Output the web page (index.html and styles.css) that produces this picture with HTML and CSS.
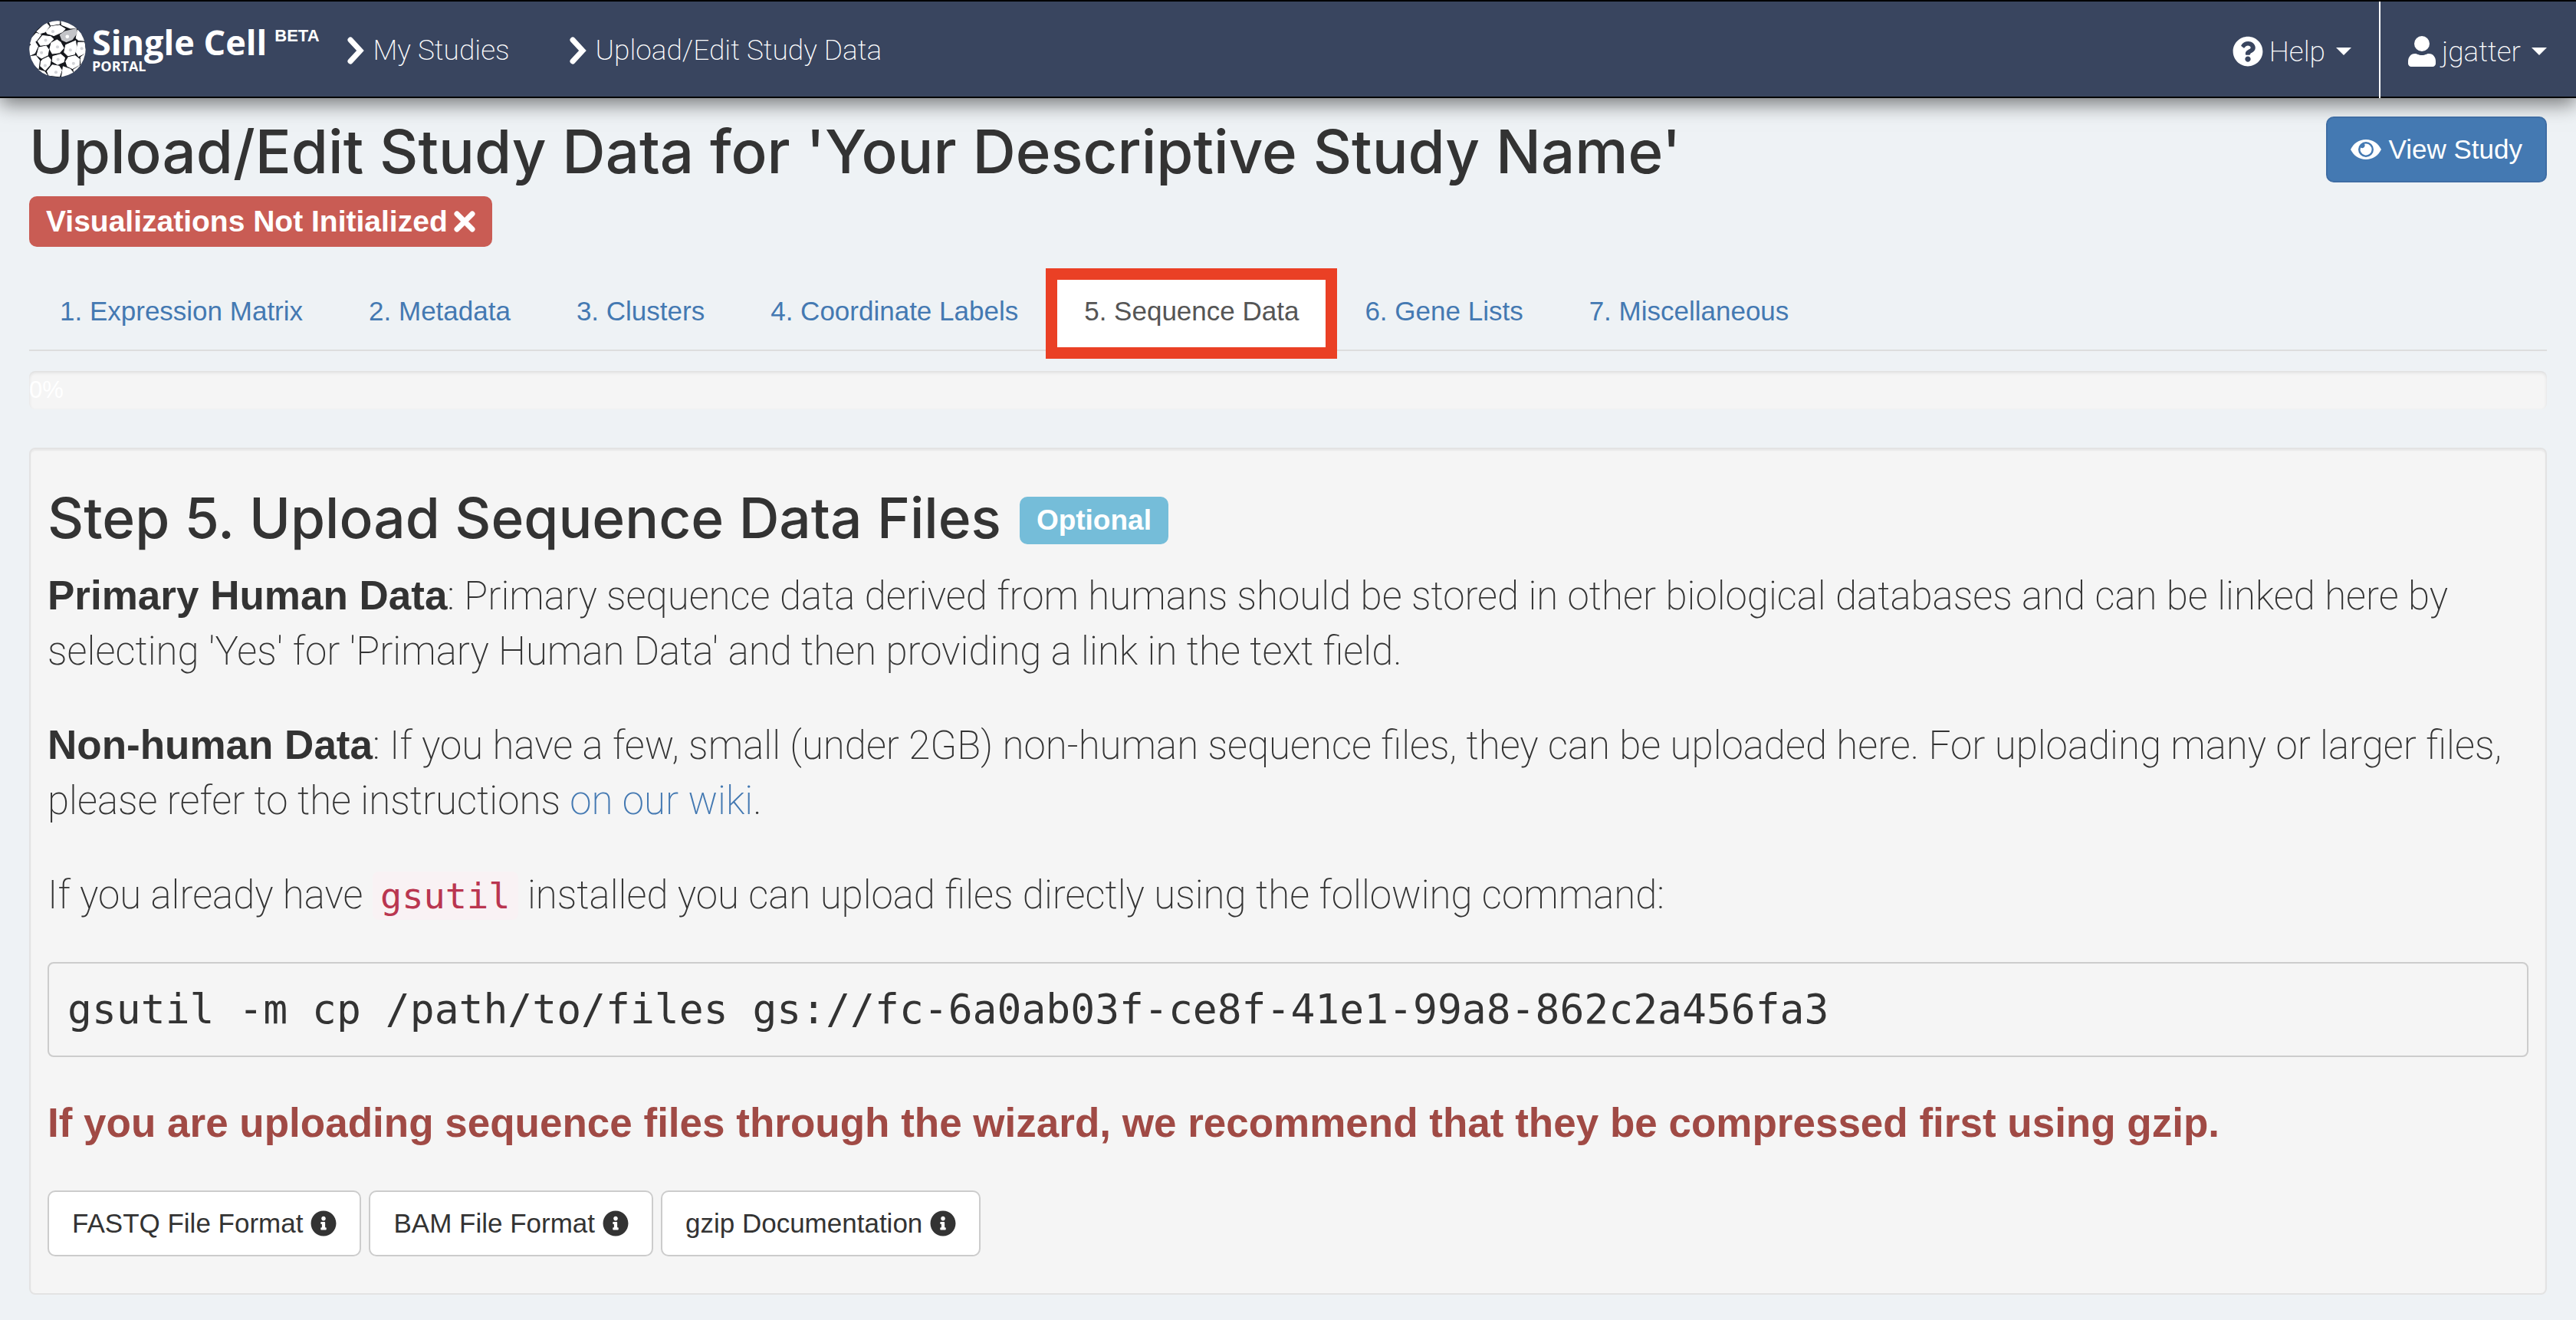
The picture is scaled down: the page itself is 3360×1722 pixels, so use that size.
FILE: index.html
```html
<!DOCTYPE html>
<html lang="en">
<head>
<meta charset="utf-8">
<title>Upload/Edit Study Data - Single Cell Portal</title>
<link rel="stylesheet" href="styles.css">
</head>
<body>
<svg class="sprite" aria-hidden="true">
  <symbol id="chevron" viewBox="0 0 22 36"><path d="M4 4 17 18 4 32" fill="none" stroke="currentColor" stroke-width="7" stroke-linecap="round" stroke-linejoin="miter"/></symbol>
  <symbol id="info" viewBox="0 0 512 512"><path fill="currentColor" d="M256 8C119 8 8 119 8 256s111 248 248 248 248-111 248-248S393 8 256 8zm0 110c23 0 42 19 42 42s-19 42-42 42-42-19-42-42 19-42 42-42zm56 254c0 7-5 12-12 12h-88c-7 0-12-5-12-12v-24c0-7 5-12 12-12h12v-64h-12c-7 0-12-5-12-12v-24c0-7 5-12 12-12h64c7 0 12 5 12 12v100h12c7 0 12 5 12 12z"/></symbol>
</svg>
<nav class="navbar">
  <a class="brand" href="#">
    <svg class="brand-mark" viewBox="0 0 220 220" aria-hidden="true">
      <defs><clipPath id="disc"><circle cx="110" cy="110" r="109"/></clipPath></defs>
      <g clip-path="url(#disc)">
        <circle cx="110" cy="110" r="110" fill="#15171c"/>
        <g fill="#fff" stroke="#fff" stroke-width="3" stroke-linejoin="round">
          <path d="M30 42 66 8 78 22 62 44 42 50z"/><path d="M76 0h42v12L84 18z"/><path d="M124 0h40l24 28-28 2-34-14z"/>
          <path d="M66 42 86 22 118 18 140 32 128 44 96 58 70 50z"/>
          <path d="M0 78 28 48 46 54 30 76 8 94z"/><path d="M34 80 52 58 84 62 94 72 74 92 44 96z"/>
          <path d="M188 36 214 60 220 78 192 76 182 68z"/>
          <path d="M86 86 108 74 122 84 134 106 118 124 90 128 80 110z"/>
          <path d="M142 94 166 84 180 78 184 106 176 130 150 136 136 122z"/>
          <path d="M190 84h24l6 40-28 14-10-16z"/>
          <path d="M0 100 24 84 34 100 22 126 0 136z"/><path d="M38 104 66 98 76 112 72 134 48 146 30 134z"/>
          <path d="M6 138 26 136 40 154 36 186 10 166z"/><path d="M54 150 74 140 84 152 80 172 62 192 44 176 46 158z"/>
          <path d="M92 138 122 130 138 144 134 160 110 170 90 158z"/>
          <path d="M142 158 152 142 178 136 196 150 194 172 168 186 148 176z"/>
          <path d="M200 142 220 126v30l-18 24z"/>
          <path d="M70 196 90 172 116 176 126 192 118 216 76 212z"/><path d="M132 178 160 188 172 204 126 220z"/><path d="M172 190 198 174 190 200 176 206z"/><path d="M36 190 60 198 70 212 40 204z"/>
        </g>
        <path fill="#c3c4c8" d="M118 54 138 40 184 30 186 50 168 74 144 84 126 76z"/>
        <g fill="#d3d4d8"><circle cx="92" cy="42" r="6"/><circle cx="64" cy="76" r="6"/><circle cx="110" cy="102" r="6"/><circle cx="160" cy="114" r="6"/><circle cx="204" cy="108" r="6"/><circle cx="48" cy="124" r="6"/><circle cx="62" cy="174" r="6"/><circle cx="112" cy="150" r="6"/><circle cx="172" cy="166" r="6"/><circle cx="104" cy="200" r="6"/></g>
        <circle cx="148" cy="62" r="7" fill="#fff"/>
      </g>
    </svg>
    <span class="brand-text"><span class="brand-name">Single Cell</span><span class="brand-sub">PORTAL</span></span>
    <span class="beta">BETA</span>
  </a>
  <a class="crumb" href="#"><svg class="chevron"><use href="#chevron"/></svg>My Studies</a>
  <a class="crumb" href="#"><svg class="chevron"><use href="#chevron"/></svg>Upload/Edit Study Data</a>
  <div class="nav-right">
    <button class="nav-menu" type="button"><svg class="nav-icon" viewBox="0 0 512 512" aria-hidden="true"><path fill="currentColor" d="M504 256c0 137-111 248-248 248S8 393 8 256 119 8 256 8s248 111 248 248zM263 90c-55 0-90 23-117 64-4 5-2 13 3 17l35 26c5 4 13 3 17-2 18-23 30-36 57-36 20 0 45 13 45 33 0 15-12 22-32 33-24 14-55 30-55 72v7c0 7 5 12 12 12h56c7 0 12-5 12-12v-2c0-29 85-30 85-108 0-59-61-104-118-104zm-7 248c-26 0-47 21-47 47s21 47 47 47 47-21 47-47-21-47-47-47z"/></svg>Help<span class="caret"></span></button>
    <button class="nav-menu user" type="button"><svg class="nav-icon user-icon" viewBox="0 0 36 40" aria-hidden="true"><circle cx="18" cy="10" r="10" fill="currentColor"/><path fill="currentColor" d="M9 23c3 0 4 2 9 2s6-2 9-2c6 0 9 5 9 10v3c0 2-2 4-4 4H4c-2 0-4-2-4-4v-3c0-5 3-10 9-10z"/></svg>jgatter<span class="caret"></span></button>
  </div>
</nav>
<main class="page">
  <header class="page-head">
    <h1>Upload/Edit Study Data for 'Your Descriptive Study Name'</h1>
    <a class="btn btn-primary" href="#"><svg class="eye" viewBox="0 0 40 28" aria-hidden="true"><path fill="currentColor" fill-rule="evenodd" d="M0 14C4 6 11 1 20 1s16 5 20 13c-4 8-11 13-20 13S4 22 0 14zM20 4a10 10 0 1 0 0 20 10 10 0 0 0 0-20z"/><path fill="currentColor" d="M20 6.500a7.500 7.500 0 1 1-7 5 3.500 3.500 0 0 0 5-4.700z"/></svg>View Study</a>
  </header>
  <span class="label label-danger">Visualizations Not Initialized<svg class="times" viewBox="0 0 28 28" aria-hidden="true"><path d="M4 4 24 24M24 4 4 24" stroke="currentColor" stroke-width="7" stroke-linecap="round"/></svg></span>
  <ul class="tabs">
    <li><a href="#">1. Expression Matrix</a></li>
    <li><a href="#">2. Metadata</a></li>
    <li><a href="#">3. Clusters</a></li>
    <li><a href="#">4. Coordinate Labels</a></li>
    <li class="active"><a href="#">5. Sequence Data</a></li>
    <li><a href="#">6. Gene Lists</a></li>
    <li><a href="#">7. Miscellaneous</a></li>
  </ul>
  <div class="progress" role="progressbar" aria-valuenow="0" aria-valuemin="0" aria-valuemax="100">0%</div>
  <section class="well">
    <h2>Step 5. Upload Sequence Data Files <span class="label label-info">Optional</span></h2>
    <p class="lead"><strong>Primary Human Data</strong>: Primary sequence data derived from humans should be stored in other biological databases and can be linked here by selecting 'Yes' for 'Primary Human Data' and then providing a link in the text field.</p>
    <p class="lead"><strong>Non-human Data</strong>: If you have a few, small (under 2GB) non-human sequence files, they can be uploaded here. For uploading many or larger files, please refer to the instructions <a href="#">on our wiki</a>.</p>
    <p class="lead">If you already have <code>gsutil</code> installed you can upload files directly using the following command:</p>
    <pre>gsutil -m cp /path/to/files gs://fc-6a0ab03f-ce8f-41e1-99a8-862c2a456fa3</pre>
    <p class="lead warning"><strong>If you are uploading sequence files through the wizard, we recommend that they be compressed first using gzip.</strong></p>
    <div class="actions">
      <a class="btn btn-default" href="#">FASTQ File Format<svg class="info"><use href="#info"/></svg></a>
      <a class="btn btn-default" href="#">BAM File Format<svg class="info"><use href="#info"/></svg></a>
      <a class="btn btn-default" href="#">gzip Documentation<svg class="info"><use href="#info"/></svg></a>
    </div>
  </section>
</main>
</body>
</html>
```
FILE: styles.css
```css
* { box-sizing: border-box; }
body {
  margin: 0;
  background: #eef2f5;
  color: #333;
  font-family: "Liberation Sans", Arial, sans-serif;
  font-size: 35px;
  line-height: 52px;
}
a { color: #4479b2; text-decoration: none; }
.sprite { display: none; }

/* Navigation bar */
.navbar {
  display: flex;
  align-items: center;
  height: 128px;
  padding-left: 38px;
  background: #39455f;
  border-top: 2px solid #000;
  border-bottom: 2px solid #000;
  box-shadow: 0 8px 24px rgba(0, 0, 0, .5);
  color: #fff;
}
.brand { display: flex; align-items: center; color: #fff; }
.brand-mark { width: 74px; height: 74px; margin-right: 8px; }
.brand-text { display: flex; flex-direction: column; font-family: "Open Sans", sans-serif; font-weight: 700; }
.brand-name { font-size: 45px; line-height: 44px; }
.brand-sub { font-size: 18px; line-height: 18px; }
.beta { align-self: flex-start; margin: 8px 0 0 10px; font-size: 22px; line-height: 24px; font-weight: 700; }
.crumb, .nav-menu {
  display: flex;
  align-items: center;
  padding-top: 4px;
  color: #fff;
  font-family: Roboto, sans-serif;
  font-size: 37px;
  font-weight: 200;
}
.crumb { margin-left: 36px; }
.crumb + .crumb { margin-left: 78px; }
.chevron { width: 22px; height: 36px; margin-right: 12px; }
.nav-right { display: flex; align-self: stretch; margin-left: auto; }
.nav-menu {
  padding: 4px 36px 0;
  margin-bottom: -2px;
  border: 0;
  background: none;
}
.nav-menu.user { border-left: 2px solid #fff; padding-right: 38px; }
.nav-icon { width: 40px; height: 40px; margin-right: 8px; }
.user-icon { width: 36px; }
.caret {
  margin-left: 14px;
  border-top: 10px solid #fff;
  border-left: 10px solid transparent;
  border-right: 10px solid transparent;
}

/* Page heading */
.page { padding: 24px 38px 34px; }
.page-head { display: flex; justify-content: space-between; align-items: flex-start; }
h1, h2 { margin: 0; font-family: Inter, sans-serif; font-weight: 500; }
h1 { font-size: 78px; line-height: 92px; }
.btn {
  display: inline-flex;
  align-items: center;
  height: 86px;
  padding: 0 30px;
  border: 2px solid #ccc;
  border-radius: 10px;
}
.btn-primary { background: #4479b2; border-color: #3e6da4; color: #fff; }
.btn-default { background: #fff; color: #333; }
.eye { width: 40px; height: 28px; margin-right: 10px; }
.info { width: 34px; height: 34px; margin-left: 10px; }
.label { display: inline-flex; align-items: center; border-radius: 10px; color: #fff; font-family: "Liberation Sans", Arial, sans-serif; font-weight: 700; }
.label-danger { height: 66px; margin-top: 12px; padding: 0 22px; background: #c95c54; font-size: 39px; }
.times { width: 28px; height: 28px; margin-left: 8px; }

/* Wizard steps */
.tabs { display: flex; gap: 6px; margin: 36px 0 0; padding: 0; list-style: none; border-bottom: 2px solid #ddd; }
.tabs li { position: relative; }
.tabs a { display: block; padding: 22px 40px 24px; position: relative; }
.tabs .active a { color: #555; }
.tabs .active::before {
  content: "";
  position: absolute;
  inset: -8px -10px -12px;
  border: 15px solid #ea4025;
  background: #fff;
}
.progress {
  height: 50px;
  margin: 26px 0 50px;
  border-radius: 8px;
  background: #f5f5f5;
  box-shadow: inset 0 2px 4px rgba(0, 0, 0, .1);
  color: #fff;
  font-size: 31px;
  line-height: 50px;
}

/* Step panel */
.well {
  padding: 48px 22px;
  border: 2px solid #e3e3e3;
  border-radius: 8px;
  background: #f5f5f5;
  box-shadow: inset 0 2px 2px rgba(0, 0, 0, .05);
}
h2 { display: flex; align-items: center; margin-bottom: 24px; font-size: 73px; line-height: 84px; }
.label-info { height: 62px; margin: 6px 0 0 24px; padding: 0 22px; background: #75bdd9; font-size: 37px; }
.lead { margin: 0 0 51px; font-family: Roboto, sans-serif; font-size: 51px; font-weight: 200; line-height: 72px; }
.lead strong { font-family: "Liberation Sans", Arial, sans-serif; font-size: 53px; line-height: 1; font-weight: 700; }
code { padding: 4px 10px; border-radius: 8px; background: #f9f2f4; color: #ba3650; font-family: "DejaVu Sans Mono", monospace; font-size: 47px; font-weight: 400; line-height: 1; }
pre {
  margin: 0 0 51px;
  padding: 24px;
  border: 2px solid #ccc;
  border-radius: 8px;
  font-family: "DejaVu Sans Mono", monospace;
  font-size: 53px;
  line-height: 72px;
}
.warning { color: #a04a45; }
.actions { display: flex; gap: 10px; }
```
